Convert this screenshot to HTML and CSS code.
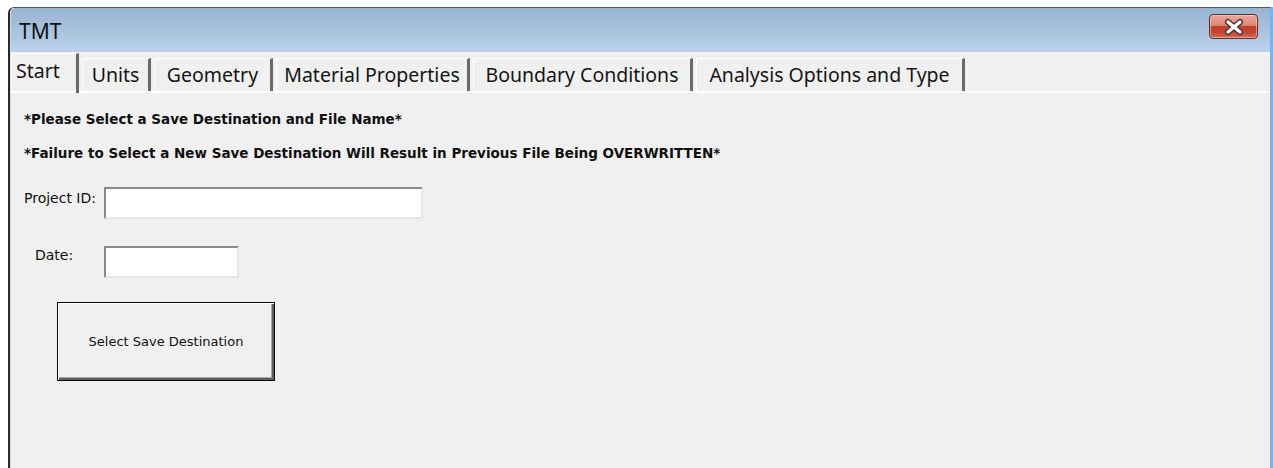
FILE: index.html
```html
<!DOCTYPE html>
<html lang="en">
<head>
<meta charset="utf-8">
<title>TMT</title>
<link rel="stylesheet" href="styles.css">
</head>
<body>
<div class="window">
  <div class="titlebar">
    <span class="title">TMT</span>
    <button class="close" aria-label="Close">
      <svg width="24" height="18" viewBox="0 0 24 18">
        <path d="M6 4 L18 14 M18 4 L6 14" stroke="#4a2c2c" stroke-width="6" stroke-linecap="round"/>
        <path d="M6 4 L18 14 M18 4 L6 14" stroke="#ffffff" stroke-width="3.4" stroke-linecap="round"/>
      </svg>
    </button>
  </div>
  <div class="tabs">
    <div class="tab active tab-start">Start</div>
    <div class="tab tab-units">Units</div>
    <div class="tab tab-geometry">Geometry</div>
    <div class="tab tab-material">Material Properties</div>
    <div class="tab tab-boundary">Boundary Conditions</div>
    <div class="tab tab-analysis">Analysis Options and Type</div>
  </div>
  <div class="page">
    <p class="notice">*Please Select a Save Destination and File Name*</p>
    <p class="notice second">*Failure to Select a New Save Destination Will Result in Previous File Being OVERWRITTEN*</p>
    <div class="field project">
      <label class="label">Project ID:</label>
      <input class="textbox wide" type="text">
    </div>
    <div class="field date">
      <label class="label indent">Date:</label>
      <input class="textbox short" type="text">
    </div>
    <button class="action">Select Save Destination</button>
  </div>
</div>
</body>
</html>
```
FILE: styles.css
```css
html, body {
  margin: 0;
  padding: 0;
  background: #ffffff;
  height: 468px;
  overflow: hidden;
}

.window {
  margin: 7px 0 0 8px;
  height: 461px;
  display: flex;
  flex-direction: column;
  border-top: 1px solid #555a60;
  border-left: 2px solid #2a2a2a;
  border-right: 3px solid #74b6e8;
  border-top-left-radius: 6px;
  background: #f0f0f0;
  box-sizing: border-box;
}

.titlebar {
  height: 44px;
  flex: none;
  display: flex;
  align-items: center;
  justify-content: space-between;
  padding: 0 12px 0 8px;
  background: linear-gradient(#98b3d1, #bad2ea);
  border-left: 1px solid #c9dcf0;
  border-top-left-radius: 5px;
}

.title {
  font-family: "Noto Sans", sans-serif;
  font-size: 21px;
  color: #111;
  position: relative;
  top: 1px;
}

.close {
  width: 49px;
  height: 25px;
  margin-top: -7px;
  padding: 0;
  border: 1px solid #5b2d2d;
  border-radius: 4px;
  background: linear-gradient(#e8a79a 0%, #dd8a79 45%, #c2412a 50%, #c4452f 75%, #d56a52 100%);
  box-shadow: inset 0 0 0 1px rgba(255, 220, 210, 0.55);
  display: flex;
  align-items: center;
  justify-content: center;
}

.tabs {
  height: 41px;
  flex: none;
  display: flex;
  align-items: flex-start;
  border-left: 1px solid #c9dcf0;
  border-bottom: 2px solid #ffffff;
  box-sizing: border-box;
}

.tab {
  font-family: "Noto Sans", sans-serif;
  font-size: 19.5px;
  color: #151515;
  margin-top: 6px;
  height: 33px;
  box-sizing: border-box;
  padding-top: 2px;
  margin-left: 3px;
  text-align: center;
  border-top: 1px solid #ffffff;
  border-left: 1px solid #ffffff;
  border-right: 3px solid #6a6a6a;
  white-space: nowrap;
}

.tab.active {
  margin-top: 1px;
  margin-left: 0;
  height: 40px;
  padding: 3px 0 0 4px;
  text-align: left;
}

.tab-start { width: 68px; }
.tab-units { width: 69px; }
.tab-geometry { width: 119px; }
.tab-material { width: 194px; }
.tab-boundary { width: 220px; }
.tab-analysis { width: 269px; }

.page {
  flex: 1;
  border-left: 1px solid #c9dcf0;
  padding: 16px 0 0 13px;
  font-family: "DejaVu Sans", sans-serif;
  font-size: 13.5px;
  color: #111;
}

.notice {
  margin: 0;
  font-weight: bold;
  line-height: 20px;
}

.notice.second {
  margin-top: 14px;
}

.field {
  display: flex;
  align-items: flex-start;
}

.field.project {
  margin-top: 24px;
}

.field.date {
  margin-top: 27px;
}

.label {
  width: 80px;
  font-size: 14px;
  line-height: 14px;
  margin-top: 4px;
}

.label.indent {
  padding-left: 11px;
  width: 69px;
  margin-top: 2px;
}

.textbox {
  margin: 0;
  padding: 0;
  height: 32px;
  box-sizing: border-box;
  background: #ffffff;
  border-top: 2px solid #8a8a8a;
  border-left: 2px solid #8a8a8a;
  border-bottom: 2px solid #e6e6e6;
  border-right: 2px solid #e6e6e6;
}

.textbox.wide {
  width: 319px;
}

.textbox.short {
  width: 135px;
}

.action {
  display: block;
  margin: 24px 0 0 33px;
  width: 218px;
  height: 79px;
  box-sizing: border-box;
  background: #f0f0f0;
  border: 1px solid #0a0a0a;
  box-shadow: inset 1px 1px 0 #ffffff, inset -2px -2px 0 #5e5e5e, inset -3px -3px 0 #a8a8a8;
  font-family: "DejaVu Sans", sans-serif;
  font-size: 13px;
  color: #111;
  padding: 0;
}
```
